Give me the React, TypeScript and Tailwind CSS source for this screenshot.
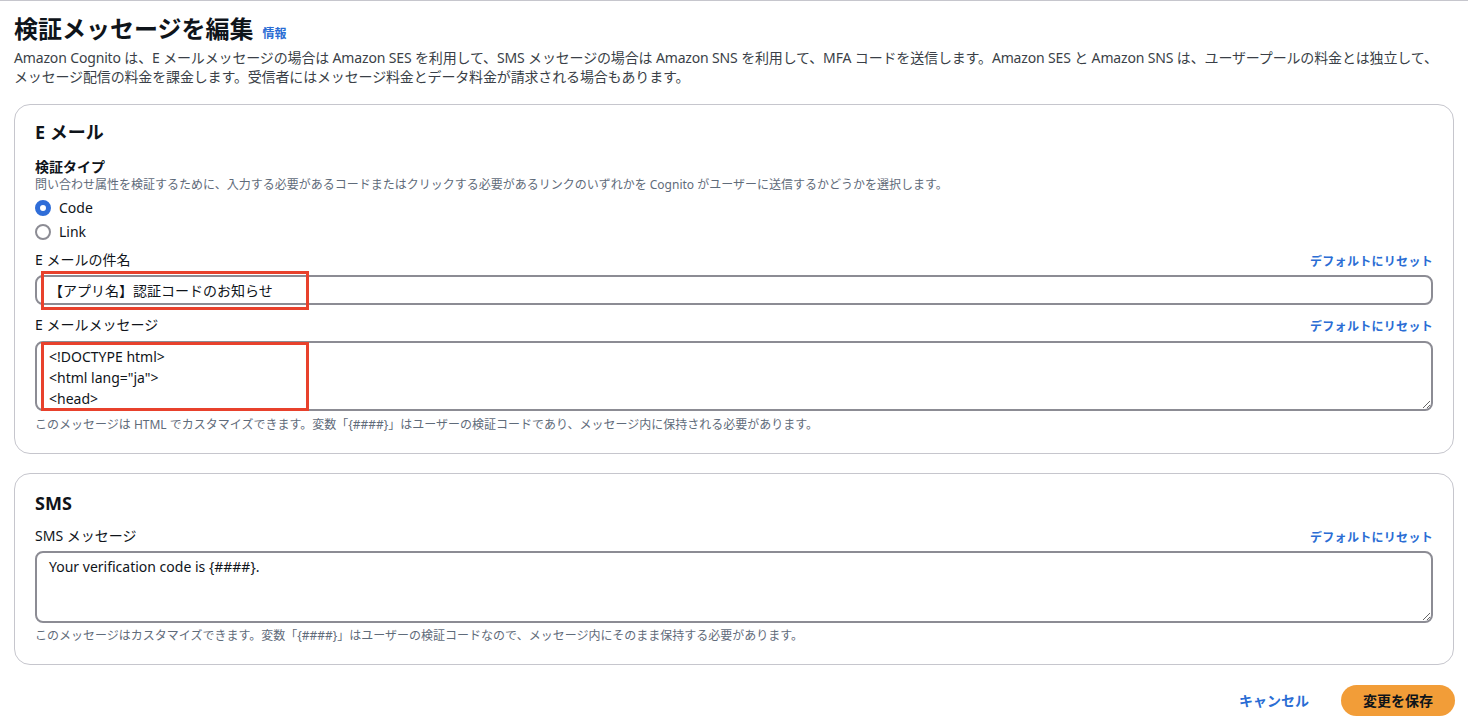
import React from "react";

const font = "font-['Noto_Sans','Noto_Sans_CJK_JP',sans-serif]";

function ResetLink() {
  return (
    <span className="text-[12px] leading-4 font-bold text-[#2a6dd4] tracking-[0.3px]">デフォルトにリセット</span>
  );
}

function Radio({ checked, label }: { checked: boolean; label: string }) {
  return (
    <div className="flex items-center gap-[8px] h-5">
      {checked ? (
        <span className="w-4 h-4 rounded-full border-[5px] border-[#2f6dd8] bg-white box-border" />
      ) : (
        <span className="w-4 h-4 rounded-full border-2 border-[#8c8c94] bg-white box-border" />
      )}
      <span className="text-[14px] leading-5 text-[#0f141a]">{label}</span>
    </div>
  );
}

function RedBox({ className }: { className: string }) {
  return <div className={"absolute border-[3px] border-[#e8412c] pointer-events-none " + className} />;
}

export default function App() {
  const emailBody = '<!DOCTYPE html>\n<html lang="ja">\n<head>\n<meta charset="UTF-8">\n<title>認証コード</title>\n</head>';
  return (
    <div className={font + " bg-white w-full min-h-[724px] border-t border-[#c6c6cd] px-[14px] text-[#0f141a]"}>
      <div className="pt-[13px] flex items-baseline gap-[9px]">
        <h1 className="text-[24px] leading-[30px] font-bold text-[#0f141a]">検証メッセージを編集</h1>
        <span className="text-[12px] font-bold text-[#2a6dd4]">情報</span>
      </div>
      <div className="mt-[4px] text-[14px] leading-[19px] text-[#3a3f47] tracking-[-0.15px]">
        <div className="whitespace-nowrap">
          Amazon Cognito は、E メールメッセージの場合は Amazon SES を利用して、SMS メッセージの場合は Amazon SNS を利用して、MFA コードを送信します。Amazon SES と Amazon SNS は、ユーザープールの料金とは独立して、
        </div>
        <div className="whitespace-nowrap">
          メッセージ配信の料金を課金します。受信者にはメッセージ料金とデータ料金が請求される場合もあります。
        </div>
      </div>

      {/* E mail card */}
      <section className="mt-[18px] border border-[#c6c6cd] rounded-[16px] px-5 pt-[16px] pb-[20px]">
        <h2 className="text-[18px] leading-[22px] font-bold">E メール</h2>
        <div className="mt-[14px]">
          <div className="text-[14px] leading-5 font-bold">検証タイプ</div>
          <div className="text-[12px] leading-4 text-[#5f6b7a]">
            問い合わせ属性を検証するために、入力する必要があるコードまたはクリックする必要があるリンクのいずれかを Cognito がユーザーに送信するかどうかを選択します。
          </div>
          <div className="mt-[5px] flex flex-col gap-[4px]">
            <Radio checked label="Code" />
            <Radio checked={false} label="Link" />
          </div>
        </div>

        <div className="mt-[8px]">
          <div className="flex items-end justify-between">
            <span className="text-[14px] leading-5">E メールの件名</span>
            <ResetLink />
          </div>
          <div className="relative mt-[5px]">
            <input
              readOnly
              value="【アプリ名】認証コードのお知らせ"
              className={font + " w-full h-[30px] border-2 border-[#8c8c94] rounded-[8px] px-3 text-[14px] text-[#0f141a] outline-none bg-white"}
            />
            <RedBox className="left-[6px] top-[-4px] w-[268px] h-[39px]" />
          </div>
        </div>

        <div className="mt-[10px]">
          <div className="flex items-end justify-between">
            <span className="text-[14px] leading-5">E メールメッセージ</span>
            <ResetLink />
          </div>
          <div className="relative mt-[6px] flex">
            <textarea
              readOnly
              defaultValue={emailBody}
              className={font + " w-full h-[70px] border-2 border-[#8c8c94] rounded-[8px] px-3 pt-[3px] text-[14px] leading-[21px] text-[#0f141a] outline-none bg-white overflow-hidden"}
            />
            <RedBox className="left-[6px] top-[1px] w-[268px] h-[69px]" />
          </div>
          <div className="mt-[6px] text-[12px] leading-4 text-[#5f6b7a]">
            このメッセージは HTML でカスタマイズできます。変数「{"{####}"}」はユーザーの検証コードであり、メッセージ内に保持される必要があります。
          </div>
        </div>
      </section>

      {/* SMS card */}
      <section className="mt-[19px] border border-[#c6c6cd] rounded-[16px] px-5 pt-[18px] pb-[20px]">
        <h2 className="text-[18px] leading-[22px] font-bold">SMS</h2>
        <div className="mt-[12px]">
          <div className="flex items-end justify-between">
            <span className="text-[14px] leading-5">SMS メッセージ</span>
            <ResetLink />
          </div>
          <div className="mt-[5px] flex">
            <textarea
              readOnly
              defaultValue="Your verification code is {####}."
              className={font + " w-full h-[72px] border-2 border-[#8c8c94] rounded-[8px] px-3 pt-[3px] text-[14px] leading-[21px] text-[#0f141a] outline-none bg-white overflow-hidden"}
            />
          </div>
          <div className="mt-[5px] text-[12px] leading-4 text-[#5f6b7a]">
            このメッセージはカスタマイズできます。変数「{"{####}"}」はユーザーの検証コードなので、メッセージ内にそのまま保持する必要があります。
          </div>
        </div>
      </section>

      <div className="mt-[20px] flex items-center justify-end gap-[32px]">
        <span className="text-[14px] font-bold text-[#2a6dd4]">キャンセル</span>
        <button className="h-[31px] px-[22px] rounded-full bg-[#f29d38] text-[14px] font-bold text-[#0f141a] mr-[-1px]">
          変更を保存
        </button>
      </div>
    </div>
  );
}
